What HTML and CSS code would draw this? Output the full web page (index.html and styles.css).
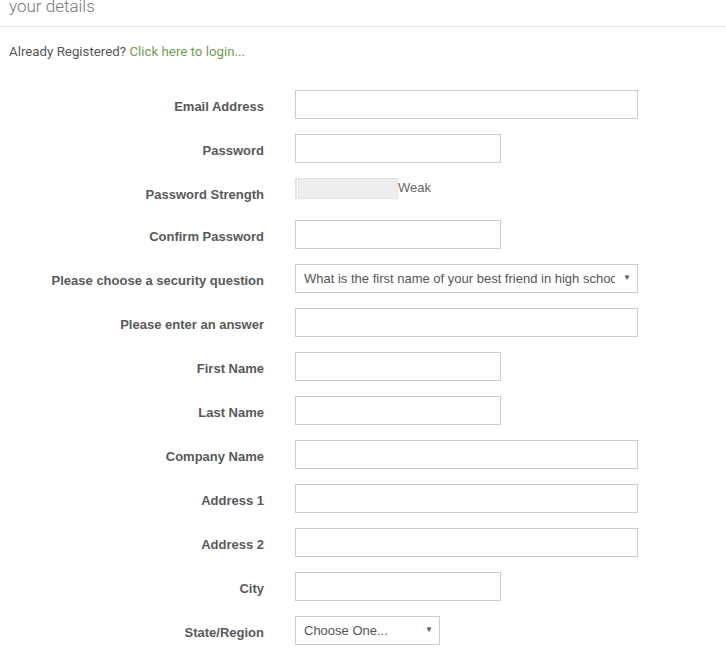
FILE: index.html
```html
<!DOCTYPE html>
<html>
<head>
<meta charset="utf-8">
<link rel="stylesheet" href="styles.css">
</head>
<body>
<div class="header"><h2 class="title">your details</h2></div>
<p class="already">Already Registered? <a href="#" class="login">Click here to login...</a></p>
<form class="form">
  <label class="lbl">Email Address</label>
  <div class="field"><input class="inp long" type="text"></div>

  <label class="lbl">Password</label>
  <div class="field"><input class="inp short" type="password"></div>

  <label class="lbl lbl-strength">Password Strength</label>
  <div class="field strength"><span class="tick"></span><span class="bar"></span><span class="weak">Weak</span></div>

  <label class="lbl">Confirm Password</label>
  <div class="field"><input class="inp short" type="password"></div>

  <label class="lbl">Please choose a security question</label>
  <div class="field"><div class="sel-wrap long"><select class="sel"><option>What is the first name of your best friend in high school?</option></select></div></div>

  <label class="lbl">Please enter an answer</label>
  <div class="field"><input class="inp long" type="text"></div>

  <label class="lbl">First Name</label>
  <div class="field"><input class="inp short" type="text"></div>

  <label class="lbl">Last Name</label>
  <div class="field"><input class="inp short" type="text"></div>

  <label class="lbl">Company Name</label>
  <div class="field"><input class="inp long" type="text"></div>

  <label class="lbl">Address 1</label>
  <div class="field"><input class="inp long" type="text"></div>

  <label class="lbl">Address 2</label>
  <div class="field"><input class="inp long" type="text"></div>

  <label class="lbl">City</label>
  <div class="field"><input class="inp short" type="text"></div>

  <label class="lbl">State/Region</label>
  <div class="field"><div class="sel-wrap state"><select class="sel"><option>Choose One...</option></select></div></div>
</form>
</body>
</html>
```

FILE: styles.css
```css
html, body {
  margin: 0;
  padding: 0;
  background: #fff;
}
body {
  font-family: "Liberation Sans", Arial, sans-serif;
  color: #555;
  overflow: hidden;
}
.header {
  height: 26px;
  border-bottom: 1px solid #e5e5e5;
  overflow: hidden;
}
.title {
  margin: -4px 0 0 9px;
  font-family: Roboto, "Liberation Sans", sans-serif;
  font-weight: 300;
  font-size: 17px;
  line-height: 20px;
  color: #777;
}
.already {
  margin: 17px 0 0 9px;
  font-family: Roboto, "Liberation Sans", sans-serif;
  font-size: 13.3px;
  line-height: 16px;
  color: #555;
}
.login {
  color: #6f9b55;
  text-decoration: none;
}
.form {
  display: grid;
  grid-template-columns: 265px 343px;
  column-gap: 30px;
  row-gap: 15px;
  margin-top: 30px;
}
.lbl {
  text-align: right;
  font-weight: bold;
  font-size: 13px;
  line-height: 17px;
  padding-top: 8px;
  padding-right: 1px;
  color: #595959;
}
.field {
  height: 29px;
  display: flex;
  align-items: flex-start;
}
.inp {
  box-sizing: border-box;
  height: 29px;
  border: 1px solid #ccc;
  border-radius: 0;
  margin: 0;
  padding: 0 8px;
  font: 13px "Liberation Sans", Arial, sans-serif;
  background: #fff;
}
.long { width: 343px; }
.short { width: 206px; }
.state { width: 145px; }
.strength {
  height: 27px;
  align-items: flex-start;
}
.tick {
  width: 2px;
  height: 21px;
  background: #e2e2e2;
  margin-right: 1px;
}
.bar {
  box-sizing: border-box;
  width: 100px;
  height: 21px;
  background: #eee;
  border: 1px solid #e3e3e3;
}
.weak {
  font-size: 13px;
  line-height: 16px;
  margin-top: 2px;
  color: #666;
}
.sel-wrap {
  position: relative;
  height: 29px;
}
.sel-wrap::after {
  content: "\25BC";
  position: absolute;
  right: 7px;
  top: 9px;
  font-size: 8px;
  line-height: 10px;
  color: #555;
  pointer-events: none;
}
.sel {
  -webkit-appearance: none;
  appearance: none;
  box-sizing: border-box;
  width: 100%;
  height: 29px;
  border: 1px solid #ccc;
  border-radius: 0;
  margin: 0;
  padding: 0 22px 0 8px;
  background: #fff;
  font: 13px "Liberation Sans", Arial, sans-serif;
  color: #555;
}
```
